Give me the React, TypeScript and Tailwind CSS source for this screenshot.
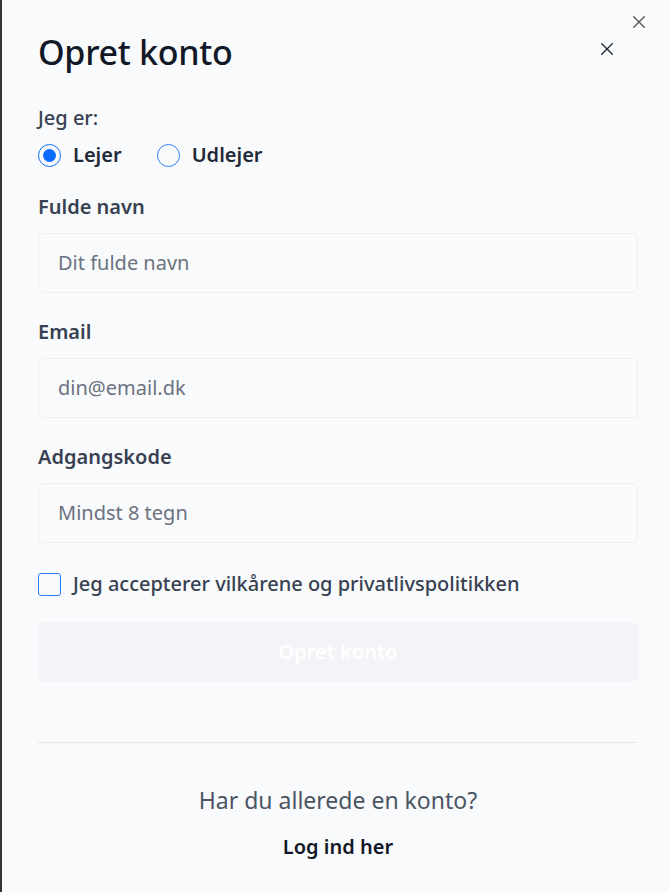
import React from "react";

function XIcon({ className }: { className?: string }) {
  return (
    <svg viewBox="0 0 16 16" className={className} fill="none" stroke="currentColor" strokeWidth={1.6} strokeLinecap="round">
      <path d="M2 2 L14 14 M14 2 L2 14" />
    </svg>
  );
}

function Field({ label, placeholder }: { label: string; placeholder: string }) {
  return (
    <div className="flex flex-col">
      <label className="text-[20px] leading-[28px] font-semibold text-[#374151]">{label}</label>
      <div className="mt-[12px] h-[60px] rounded-[6px] border border-[#eeeff1] bg-[#f9fafb] flex items-center px-[19px]">
        <span className="text-[20px] text-[#6b7280]">{placeholder}</span>
      </div>
    </div>
  );
}

export default function App() {
  return (
    <div
      className="relative min-h-[892px] w-[669px] bg-[#f9fafb] border-l-2 border-[#333333]"
      style={{ fontFamily: '"Noto Sans", "Open Sans", sans-serif' }}
    >
      <button className="absolute right-[23px] top-[15px] text-[#555] w-[14px] h-[14px]">
        <XIcon className="w-[14px] h-[14px]" />
      </button>
      <div className="pl-[36px] pr-[31px] pt-[32px]">
        <div className="flex items-center justify-between h-[40px]">
          <h1 className="text-[34px] leading-[40px] font-medium tracking-[-0.3px] text-[#111827]">Opret konto</h1>
          <button className="mr-[24px] mt-[-6px] text-[#1f2937]">
            <XIcon className="w-[14px] h-[14px]" />
          </button>
        </div>

        <div className="mt-[32px] text-[20px] leading-[28px] font-medium text-[#374151]">Jeg er:</div>
        <div className="mt-[9px] flex items-center gap-[35px] h-[28px]">
          <label className="flex items-center gap-[12px]">
            <span className="w-[23px] h-[23px] rounded-full border-[1.5px] border-[#0a6cff] flex items-center justify-center">
              <span className="w-[13px] h-[13px] rounded-full bg-[#0a6cff]" />
            </span>
            <span className="text-[20px] font-semibold text-[#1f2937]">Lejer</span>
          </label>
          <label className="flex items-center gap-[12px]">
            <span className="w-[23px] h-[23px] rounded-full border-[1.5px] border-[#2f7cf6]" />
            <span className="text-[20px] font-semibold text-[#1f2937]">Udlejer</span>
          </label>
        </div>

        <div className="mt-[24px] flex flex-col gap-[25px]">
          <Field label="Fulde navn" placeholder="Dit fulde navn" />
          <Field label="Email" placeholder="din@email.dk" />
          <Field label="Adgangskode" placeholder="Mindst 8 tegn" />
        </div>

        <label className="mt-[27px] flex items-center gap-[12px] h-[28px]">
          <span className="w-[23px] h-[23px] rounded-[3px] border-[1.5px] border-[#2f7cf6]" />
          <span className="text-[20px] font-medium text-[#374151]">Jeg accepterer vilkårene og privatlivspolitikken</span>
        </label>

        <button className="mt-[24px] w-full h-[60px] rounded-[6px] bg-[#f3f4f7] text-white text-[20px] font-semibold">
          Opret konto
        </button>

        <div className="mt-[60px] border-t border-[#e5e7eb]" />

        <div className="mt-[42px] text-center text-[23px] leading-[30px] text-[#4b5563]">Har du allerede en konto?</div>
        <div className="mt-[18px] text-center text-[20px] leading-[28px] font-semibold text-[#111827]">Log ind her</div>
      </div>
    </div>
  );
}
